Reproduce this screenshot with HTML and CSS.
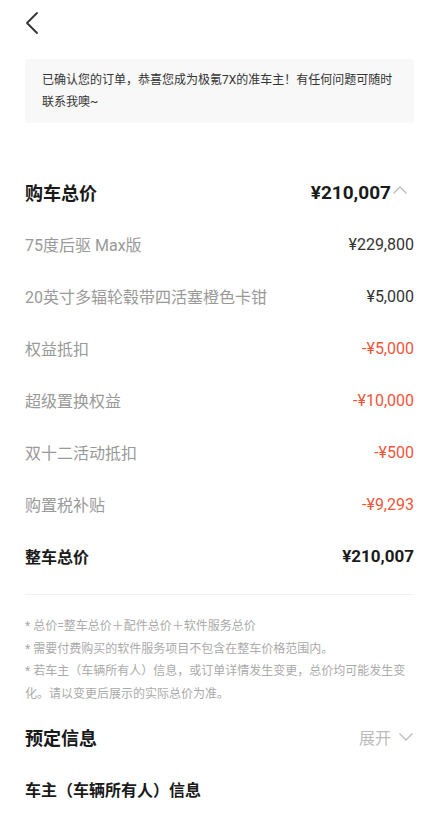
FILE: index.html
```html
<!DOCTYPE html>
<html lang="zh-CN">
<head>
    <meta charset="UTF-8">
    <meta name="viewport" content="width=device-width, initial-scale=1.0">
    <title>订单详情</title>
    <link rel="stylesheet" href="styles.css">
</head>
<body>
    <div class="page">
        <div class="top-bar">
            <svg class="back" width="14" height="24" viewBox="0 0 14 24">
                <path d="M12 2 L2 12 L12 22" fill="none" stroke="#333" stroke-width="1.8" stroke-linecap="round" stroke-linejoin="round"/>
            </svg>
        </div>

        <div class="notice">已确认您的订单，恭喜您成为极氪7X的准车主！有任何问题可随时联系我噢~</div>

        <div class="price-list">
            <div class="row row-title">
                <span class="title">购车总价</span>
                <span class="total">¥210,007
                    <svg class="chevron" width="16" height="10" viewBox="0 0 16 10">
                        <path d="M1.5 8.5 L8 2 L14.5 8.5" fill="none" stroke="#bbb" stroke-width="1.3"/>
                    </svg>
                </span>
            </div>
            <div class="row">
                <span class="label">75度后驱 Max版</span>
                <span class="value">¥229,800</span>
            </div>
            <div class="row">
                <span class="label">20英寸多辐轮毂带四活塞橙色卡钳</span>
                <span class="value">¥5,000</span>
            </div>
            <div class="row">
                <span class="label">权益抵扣</span>
                <span class="value minus">-¥5,000</span>
            </div>
            <div class="row">
                <span class="label">超级置换权益</span>
                <span class="value minus">-¥10,000</span>
            </div>
            <div class="row">
                <span class="label">双十二活动抵扣</span>
                <span class="value minus">-¥500</span>
            </div>
            <div class="row">
                <span class="label">购置税补贴</span>
                <span class="value minus">-¥9,293</span>
            </div>
            <div class="row">
                <span class="sum-label">整车总价</span>
                <span class="sum-value">¥210,007</span>
            </div>
        </div>

        <div class="notes">
            <p>* 总价=整车总价＋配件总价＋软件服务总价</p>
            <p>* 需要付费购买的软件服务项目不包含在整车价格范围内。</p>
            <p>* 若车主（车辆所有人）信息，或订单详情发生变更，总价均可能发生变化。请以变更后展示的实际总价为准。</p>
        </div>

        <div class="row row-title">
            <span class="title">预定信息</span>
            <span class="expand">展开
                <svg class="chevron" width="16" height="10" viewBox="0 0 16 10">
                    <path d="M1.5 1.5 L8 8 L14.5 1.5" fill="none" stroke="#bbb" stroke-width="1.3"/>
                </svg>
            </span>
        </div>
        <div class="row">
            <span class="sub-title">车主（车辆所有人）信息</span>
        </div>
    </div>
</body>
</html>
```

FILE: styles.css
```css
body {
    margin: 0;
    background-color: #fff;
    font-family: Roboto, "Noto Sans CJK SC", sans-serif;
    color: #333;
}

.page {
    padding: 0 23px 0 25px;
}

.top-bar {
    height: 46px;
    display: flex;
    align-items: center;
}

.notice {
    margin-top: 13px;
    background-color: #f8f8f8;
    border-radius: 4px;
    padding: 10px 17px;
    font-size: 12px;
    line-height: 22px;
    color: #333;
}

.price-list {
    margin-top: 43px;
    border-bottom: 1px solid #f0f0f0;
    padding-bottom: 12px;
}

.row {
    height: 52px;
    display: flex;
    align-items: center;
    justify-content: space-between;
}

.title {
    font-size: 18px;
    font-weight: bold;
    color: #1a1a1a;
}

.total {
    font-size: 19px;
    font-weight: bold;
    color: #1a1a1a;
    display: flex;
    align-items: center;
    margin-right: 6px;
}

.total .chevron {
    margin-left: 1px;
    margin-top: -4px;
}

.label {
    font-size: 16px;
    color: #999;
}

.value {
    font-size: 16px;
    color: #333;
}

.minus {
    color: #f0553a;
}

.sum-label {
    font-size: 16px;
    font-weight: bold;
    color: #1a1a1a;
}

.sum-value {
    font-size: 17px;
    font-weight: bold;
    color: #1a1a1a;
}

.notes {
    padding-top: 20px;
    margin-bottom: 6px;
}

.notes p {
    margin: 0;
    font-size: 12px;
    line-height: 22.5px;
    color: #aaa;
}

.expand {
    font-size: 16px;
    color: #bbb;
    display: flex;
    align-items: center;
}

.expand .chevron {
    margin-left: 7px;
}

.sub-title {
    font-size: 16px;
    font-weight: bold;
    color: #1a1a1a;
}
```
